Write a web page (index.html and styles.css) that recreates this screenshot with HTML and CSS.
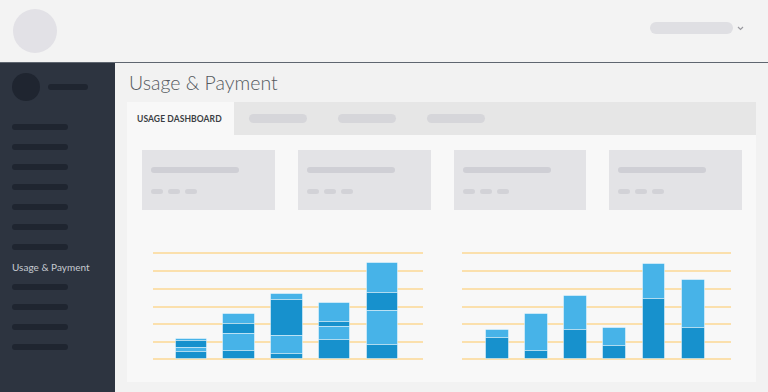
FILE: index.html
```html
<!DOCTYPE html>
<html>
<head>
<meta charset="utf-8">
<link rel="stylesheet" href="styles.css">
</head>
<body>
<header class="topbar">
  <div class="logo"></div>
  <div class="account">
    <div class="pill account-pill"></div>
    <svg class="chevron" width="7" height="5" viewBox="0 0 7 5"><path d="M1 1 L3.5 3.5 L6 1" fill="none" stroke="#9a9aa0" stroke-width="1.2"/></svg>
  </div>
</header>
<div class="layout">
  <nav class="sidebar">
    <div class="profile">
      <div class="avatar"></div>
      <div class="bar name"></div>
    </div>
    <ul class="menu">
      <li><span class="bar"></span></li>
      <li><span class="bar"></span></li>
      <li><span class="bar"></span></li>
      <li><span class="bar"></span></li>
      <li><span class="bar"></span></li>
      <li><span class="bar"></span></li>
      <li><span class="bar"></span></li>
      <li class="active">Usage &amp; Payment</li>
      <li><span class="bar"></span></li>
      <li><span class="bar"></span></li>
      <li><span class="bar"></span></li>
      <li><span class="bar"></span></li>
    </ul>
  </nav>
  <main class="main">
    <h1 class="title">Usage &amp; Payment</h1>
    <section class="panel">
      <div class="tabs">
        <div class="tab active">USAGE DASHBOARD</div>
        <div class="tab"><span class="pill tab-pill"></span></div>
        <div class="tab"><span class="pill tab-pill"></span></div>
        <div class="tab"><span class="pill tab-pill"></span></div>
      </div>
      <div class="panel-body">
        <div class="cards">
          <div class="card"><div class="card-line"></div><div class="card-dots"><span></span><span></span><span></span></div></div>
          <div class="card"><div class="card-line"></div><div class="card-dots"><span></span><span></span><span></span></div></div>
          <div class="card"><div class="card-line"></div><div class="card-dots"><span></span><span></span><span></span></div></div>
          <div class="card"><div class="card-line"></div><div class="card-dots"><span></span><span></span><span></span></div></div>
        </div>
        <div class="charts">
          <svg class="chart" width="270" height="108" viewBox="0 0 270 108">
            <g class="grid">
              <line x1="0" x2="270" y1="1" y2="1"/>
              <line x1="0" x2="270" y1="19" y2="19"/>
              <line x1="0" x2="270" y1="37" y2="37"/>
              <line x1="0" x2="270" y1="55" y2="55"/>
              <line x1="0" x2="270" y1="72" y2="72"/>
              <line x1="0" x2="270" y1="90" y2="90"/>
              <line x1="0" x2="270" y1="107" y2="107"/>
            </g>
            <g class="seg">
              <rect class="l" x="22.5" y="86.5" width="31" height="2"/>
              <rect class="d" x="22.5" y="88.5" width="31" height="7"/>
              <rect class="l" x="22.5" y="95.5" width="31" height="4"/>
              <rect class="d" x="22.5" y="99.5" width="31" height="7"/>

              <rect class="l" x="69.5" y="61.5" width="32" height="10"/>
              <rect class="d" x="69.5" y="71.5" width="32" height="10"/>
              <rect class="l" x="69.5" y="81.5" width="32" height="17"/>
              <rect class="d" x="69.5" y="98.5" width="32" height="8"/>

              <rect class="l" x="117.5" y="41.5" width="32" height="6"/>
              <rect class="d" x="117.5" y="47.5" width="32" height="36"/>
              <rect class="l" x="117.5" y="83.5" width="32" height="18"/>
              <rect class="d" x="117.5" y="101.5" width="32" height="5"/>

              <rect class="l" x="165.5" y="50.5" width="31" height="19"/>
              <rect class="d" x="165.5" y="69.5" width="31" height="5"/>
              <rect class="l" x="165.5" y="74.5" width="31" height="13"/>
              <rect class="d" x="165.5" y="87.5" width="31" height="19"/>

              <rect class="l" x="213.5" y="10.5" width="31" height="30"/>
              <rect class="d" x="213.5" y="40.5" width="31" height="18"/>
              <rect class="l" x="213.5" y="58.5" width="31" height="34"/>
              <rect class="d" x="213.5" y="92.5" width="31" height="14"/>
            </g>
          </svg>
          <svg class="chart" width="270" height="108" viewBox="0 0 270 108">
            <g class="grid">
              <line x1="0" x2="269" y1="1" y2="1"/>
              <line x1="0" x2="269" y1="19" y2="19"/>
              <line x1="0" x2="269" y1="37" y2="37"/>
              <line x1="0" x2="269" y1="55" y2="55"/>
              <line x1="0" x2="269" y1="72" y2="72"/>
              <line x1="0" x2="269" y1="90" y2="90"/>
              <line x1="0" x2="269" y1="107" y2="107"/>
            </g>
            <g class="seg">
              <rect class="l" x="23.5" y="77.5" width="23" height="8"/>
              <rect class="d" x="23.5" y="85.5" width="23" height="21"/>

              <rect class="l" x="62.5" y="61.5" width="23" height="37"/>
              <rect class="d" x="62.5" y="98.5" width="23" height="8"/>

              <rect class="l" x="101.5" y="43.5" width="23" height="34"/>
              <rect class="d" x="101.5" y="77.5" width="23" height="29"/>

              <rect class="l" x="140.5" y="75.5" width="23" height="18"/>
              <rect class="d" x="140.5" y="93.5" width="23" height="13"/>

              <rect class="l" x="180.5" y="11.5" width="22" height="35"/>
              <rect class="d" x="180.5" y="46.5" width="22" height="60"/>

              <rect class="l" x="219.5" y="27.5" width="23" height="48"/>
              <rect class="d" x="219.5" y="75.5" width="23" height="31"/>
            </g>
          </svg>
        </div>
      </div>
    </section>
  </main>
</div>
</body>
</html>
```
FILE: styles.css
```css
* { box-sizing: border-box; }
html, body { margin: 0; padding: 0; }
body {
  width: 768px;
  height: 392px;
  overflow: hidden;
  background: #f2f2f2;
  font-family: Lato, "Open Sans", sans-serif;
}
.topbar {
  height: 63px;
  background: #f3f3f3;
  border-bottom: 1px solid #5f6670;
  display: flex;
  align-items: flex-start;
  justify-content: space-between;
  padding: 9px 24px 0 13px;
}
.logo {
  width: 44px;
  height: 44px;
  border-radius: 50%;
  background: #e2e1e6;
}
.account {
  display: flex;
  align-items: center;
  gap: 4px;
  margin-top: 13px;
}
.pill {
  display: block;
  border-radius: 6px;
  background: #dfdfe3;
}
.account-pill { width: 83px; height: 12px; }
.chevron { display: block; }

.layout {
  display: flex;
  height: 329px;
}
.sidebar {
  width: 115px;
  flex: none;
  background: #2d3440;
  padding: 10px 0 0 12px;
}
.profile {
  display: flex;
  align-items: center;
  gap: 8px;
}
.avatar {
  width: 28px;
  height: 28px;
  border-radius: 50%;
  background: #1f2530;
}
.bar {
  display: block;
  height: 6px;
  border-radius: 3px;
  background: #1f2530;
}
.bar.name { width: 40px; }
.menu {
  list-style: none;
  margin: 16px 0 0;
  padding: 0;
}
.menu li {
  height: 20px;
  display: flex;
  align-items: center;
}
.menu li .bar { width: 56px; }
.menu li.active {
  color: #c6cad0;
  font-size: 10px;
  font-family: Lato, sans-serif;
}

.main {
  flex: 1;
  padding: 7px 12px 0 12px;
  display: flex;
  flex-direction: column;
}
.title {
  margin: 0 0 6px 2px;
  font-size: 19.5px;
  line-height: 26px;
  font-weight: 300;
  color: #555a60;
}
.panel {
  width: 629px;
  display: flex;
  flex-direction: column;
}
.tabs {
  height: 33px;
  background: #e6e6e6;
  display: flex;
  align-items: center;
}
.tab {
  height: 33px;
  display: flex;
  align-items: center;
}
.tab.active {
  width: 107px;
  background: #f8f8f8;
  padding-left: 10px;
  font-size: 8.5px;
  font-weight: 700;
  color: #3a3d42;
  letter-spacing: 0.1px;
}
.tab + .tab { padding-left: 15px; }
.tab + .tab + .tab { padding-left: 31px; }
.tab-pill { width: 58px; height: 9px; border-radius: 5px; background: #d6d6da; }

.panel-body {
  height: 247px;
  background: #f8f8f8;
  padding: 15px 14px 0 15px;
}
.cards {
  display: flex;
  gap: 23px;
}
.card {
  width: 133px;
  height: 60px;
  background: #e3e3e6;
  padding: 17px 0 0 9px;
}
.card-line {
  width: 88px;
  height: 6px;
  border-radius: 3px;
  background: #cfcfd5;
}
.card-dots {
  display: flex;
  gap: 5px;
  margin-top: 16px;
}
.card-dots span {
  width: 12px;
  height: 5px;
  border-radius: 3px;
  background: #d2d2d7;
}
.charts {
  display: flex;
  gap: 39px;
  margin: 42px 0 0 11px;
}
.chart { display: block; }
.grid line {
  stroke: #fcd994;
  stroke-width: 1.5;
}
.seg rect { stroke: rgba(255,255,255,0.45); stroke-width: 1; }
.seg .l { fill: #47b3e8; }
.seg .d { fill: #1791cd; }
```
